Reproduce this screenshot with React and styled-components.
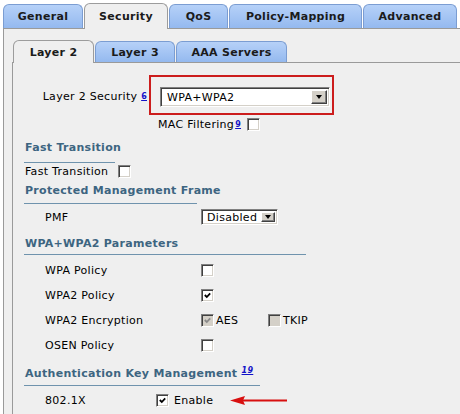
import React from 'react';
import styled, { createGlobalStyle } from 'styled-components';

const GlobalStyle = createGlobalStyle`
  html, body { margin: 0; padding: 0; background: #fff; }
  body {
    font-family: "DejaVu Sans", Verdana, sans-serif;
    font-size: 11px;
    letter-spacing: 0.3px;
    color: #000;
  }
`;

const Screen = styled.div`
  width: 460px;
  height: 414px;
  overflow: hidden;
  background: #fff;
`;

const TabBar = styled.div`
  display: flex;
  align-items: flex-end;
  gap: 1px;
  height: 25px;
  padding: 3px 0 0 3px;
`;

const Tab = styled.div`
  position: relative;
  z-index: ${p => (p.$active ? 2 : 1)};
  box-sizing: border-box;
  width: ${p => p.$w}px;
  height: ${p => (p.$active ? 26 : 24)}px;
  margin-bottom: ${p => (p.$active ? -1 : 0)}px;
  display: flex;
  align-items: center;
  justify-content: center;
  border: 1px solid ${p => (p.$active ? '#9c9c9c' : '#7b9dd2')};
  border-bottom: none;
  border-radius: 6px 6px 0 0;
  background: ${p => (p.$active ? '#efefef' : 'linear-gradient(#b6d1f8, #94b9ef)')};
  font-weight: bold;
  color: #1b1b1b;
  white-space: nowrap;
`;

const InnerTab = styled(Tab)`
  height: ${p => (p.$active ? 23 : 21)}px;
`;

const Panel = styled.div`
  margin-left: 3px;
  height: 386px;
  border-left: 1px solid #9a9a9a;
  border-top: 1px solid #9a9a9a;
  background: #efefef;
  padding: 11px 0 0 8px;
`;

const InnerTabBar = styled.div`
  display: flex;
  align-items: flex-end;
  gap: 1px;
  height: 22px;
  padding-left: 1px;
`;

const InnerPanel = styled.div`
  height: 360px;
  border-left: 1px solid #9a9a9a;
  border-top: 1px solid #9a9a9a;
`;

const SecurityRow = styled.div`
  display: flex;
  margin-top: 12px;
`;

const FieldLabel = styled.div`
  width: 136px;
  box-sizing: border-box;
  text-align: right;
  padding: 15px 2px 0 0;
  line-height: 14px;
  white-space: nowrap;
`;

const RedBox = styled.div`
  width: 185px;
  height: 40px;
  box-sizing: border-box;
  border: 2px solid #cc1d1d;
  padding: 10px 0 0 9px;
`;

const Select = styled.div`
  display: flex;
  align-items: center;
  width: ${p => p.$w}px;
  height: ${p => p.$h}px;
  box-sizing: border-box;
  border-style: solid;
  border-width: 1px;
  border-color: #808080 #fff #fff #808080;
  box-shadow: inset 1px 1px #404040, inset -1px -1px #d4d0c8;
  background: #fff;
  padding: 0 2px 0 0;
`;

const SelectText = styled.span`
  flex: 1;
  padding-left: ${p => p.$pl}px;
  white-space: nowrap;
`;

const SelectButton = styled.span`
  display: flex;
  align-items: center;
  justify-content: center;
  width: ${p => p.$w}px;
  height: calc(100% - 4px);
  box-sizing: border-box;
  background: #d4d0c8;
  border-style: solid;
  border-width: 1px;
  border-color: #fff #404040 #404040 #fff;
  box-shadow: inset -1px -1px #808080;
`;

const Triangle = styled.span`
  width: 0;
  height: 0;
  border-left: 3.5px solid transparent;
  border-right: 3.5px solid transparent;
  border-top: 4px solid #000;
`;

const Sup = styled.a`
  color: #1212c8;
  font-size: 8px;
  font-weight: bold;
  font-style: ${p => (p.$italic ? 'italic' : 'normal')};
  text-decoration: underline;
  vertical-align: ${p => p.$raise}px;
  margin-left: ${p => p.$ml}px;
`;

const MacRow = styled.div`
  display: flex;
  align-items: center;
  height: 14px;
  margin-top: 2px;
  padding-left: 145px;
  white-space: nowrap;
`;

const Heading = styled.div`
  box-sizing: border-box;
  width: ${p => p.$w}px;
  margin: ${p => p.$mt}px 0 0 11px;
  padding: 0 0 ${p => p.$pb}px 1px;
  border-bottom: 1px solid #6f93ad;
  font-weight: bold;
  color: #3d6581;
  line-height: 14px;
  white-space: nowrap;
`;

const Row = styled.div`
  display: grid;
  grid-template-columns: ${p => p.$col}px auto;
  align-items: center;
  height: ${p => p.$h}px;
  margin-top: ${p => p.$mt || 0}px;
  white-space: nowrap;
`;

const Label = styled.span`
  padding-left: ${p => p.$pl}px;
`;

const Cell = styled.span`
  display: flex;
  align-items: center;
`;

const Group = styled.span`
  display: flex;
  align-items: center;
  width: ${p => p.$w}px;
`;

const Box = styled.span`
  display: inline-flex;
  align-items: center;
  justify-content: center;
  flex: none;
  width: 13px;
  height: 13px;
  box-sizing: border-box;
  border-style: solid;
  border-width: 1px;
  border-color: #808080 #fff #fff #808080;
  box-shadow: inset 1px 1px #404040, inset -1px -1px #d4d0c8;
  background: ${p => (p.$disabled ? '#d4d0c8' : '#fff')};
  margin-left: ${p => p.$ml || 0}px;
`;

const BoxText = styled.span`
  margin-left: ${p => p.$ml}px;
`;

const ArrowWrap = styled.span`
  display: flex;
  margin-left: 17px;
`;

const Checkbox = ({ checked, disabled, ml }) => (
  <Box $disabled={disabled} $ml={ml}>
    {checked && (
      <svg width="7" height="7" viewBox="0 0 7 7">
        <polyline
          points="0.8,3 2.8,5 6.2,1.4"
          fill="none"
          stroke={disabled ? '#8a8a8a' : '#000'}
          strokeWidth="1.8"
        />
      </svg>
    )}
  </Box>
);

const Dropdown = ({ value, w, h, pl, bw }) => (
  <Select $w={w} $h={h}>
    <SelectText $pl={pl}>{value}</SelectText>
    <SelectButton $w={bw}>
      <Triangle />
    </SelectButton>
  </Select>
);

const RedArrow = () => (
  <ArrowWrap>
    <svg width="57" height="11" viewBox="0 0 57 11">
      <polygon points="0,5.5 15,1 13,5.5 15,10" fill="#d80f0f" />
      <rect x="12" y="4.5" width="45" height="2" fill="#d80f0f" />
    </svg>
  </ArrowWrap>
);

const outerTabs = [
  { name: 'General', w: 80 },
  { name: 'Security', w: 84, active: true },
  { name: 'QoS', w: 59 },
  { name: 'Policy-Mapping', w: 133 },
  { name: 'Advanced', w: 94 },
];

const innerTabs = [
  { name: 'Layer 2', w: 81, active: true },
  { name: 'Layer 3', w: 80 },
  { name: 'AAA Servers', w: 111 },
];

export default function App() {
  return (
    <Screen>
      <GlobalStyle />
      <TabBar>
        {outerTabs.map(t => (
          <Tab key={t.name} $w={t.w} $active={t.active}>{t.name}</Tab>
        ))}
      </TabBar>
      <Panel>
        <InnerTabBar>
          {innerTabs.map(t => (
            <InnerTab key={t.name} $w={t.w} $active={t.active}>{t.name}</InnerTab>
          ))}
        </InnerTabBar>
        <InnerPanel>
          <SecurityRow>
            <FieldLabel>
              Layer 2 Security <Sup href="#" $raise={1} $ml={0}>6</Sup>
            </FieldLabel>
            <RedBox>
              <Dropdown value="WPA+WPA2" w={170} h={20} pl={6} bw={16} />
            </RedBox>
          </SecurityRow>
          <MacRow>
            MAC Filtering<Sup href="#" $raise={4} $ml={1}>9</Sup>
            <Checkbox ml={6} />
          </MacRow>

          <Heading $w={91} $mt={10} $pb={7}>Fast Transition</Heading>
          <Row $col={105} $h={14} $mt={1}>
            <Label $pl={12}>Fast Transition</Label>
            <Cell><Checkbox /></Cell>
          </Row>

          <Heading $w={173} $mt={6} $pb={5}>Protected Management Frame</Heading>
          <Row $col={188} $h={16} $mt={5}>
            <Label $pl={32}>PMF</Label>
            <Cell><Dropdown value="Disabled" w={77} h={16} pl={5} bw={14} /></Cell>
          </Row>

          <Heading $w={282} $mt={12} $pb={3}>WPA+WPA2 Parameters</Heading>
          <Row $col={188} $h={25} $mt={3}>
            <Label $pl={32}>WPA Policy</Label>
            <Cell><Checkbox /></Cell>
          </Row>
          <Row $col={188} $h={25}>
            <Label $pl={32}>WPA2 Policy</Label>
            <Cell><Checkbox checked /></Cell>
          </Row>
          <Row $col={188} $h={25}>
            <Label $pl={32}>WPA2 Encryption</Label>
            <Cell>
              <Group $w={67}>
                <Checkbox checked disabled />
                <BoxText $ml={2}>AES</BoxText>
              </Group>
              <Group>
                <Checkbox disabled />
                <BoxText $ml={2}>TKIP</BoxText>
              </Group>
            </Cell>
          </Row>
          <Row $col={188} $h={25}>
            <Label $pl={32}>OSEN Policy</Label>
            <Cell><Checkbox /></Cell>
          </Row>

          <Heading $w={236} $mt={6} $pb={4}>
            Authentication Key Management <Sup href="#" $italic $raise={4} $ml={0}>19</Sup>
          </Heading>
          <Row $col={143} $h={14} $mt={7}>
            <Label $pl={32}>802.1X</Label>
            <Cell>
              <Checkbox checked />
              <BoxText $ml={5}>Enable</BoxText>
              <RedArrow />
            </Cell>
          </Row>
        </InnerPanel>
      </Panel>
    </Screen>
  );
}
